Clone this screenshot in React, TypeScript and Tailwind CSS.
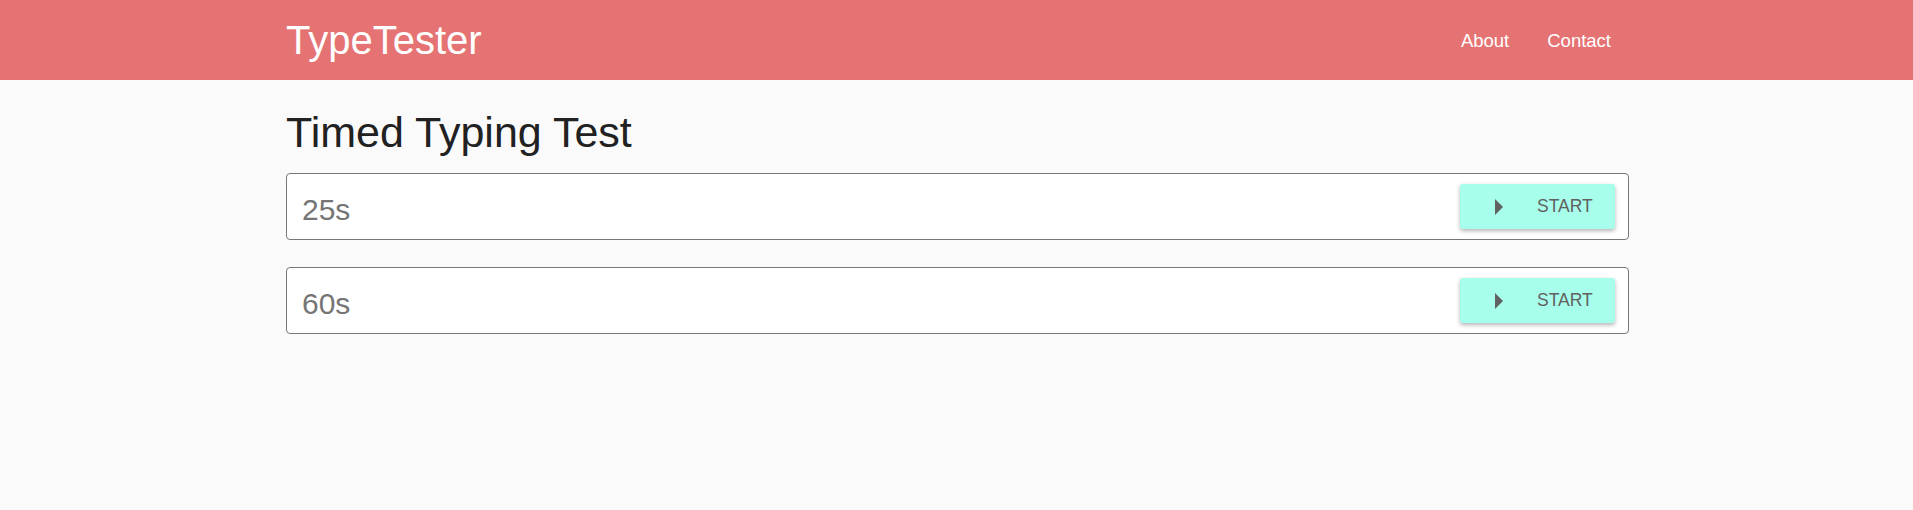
export default function App() {
  const tests = ["25s", "60s"]

  return (
    <div className="min-h-[510px] bg-[#fafafa] font-['Liberation_Sans',Arial,sans-serif]">
      {/* Header */}
      <header className="h-[80px] bg-[#e57373] pl-[2px]">
        <div className="mx-auto flex h-full w-[1343px] items-center justify-between">
          <span className="text-[40px] leading-none text-white">TypeTester</span>
          <nav className="flex items-center pt-[2px]">
            <a href="#" className="px-[19px] text-[18.5px] text-white">
              About
            </a>
            <a href="#" className="pl-[19px] pr-[18px] text-[18.5px] text-white">
              Contact
            </a>
          </nav>
        </div>
      </header>

      {/* Content */}
      <main className="pl-[2px]">
        <div className="mx-auto w-[1343px]">
          <h1 className="pt-[31px] pb-[19px] text-[43px] leading-none text-[#212121]">Timed Typing Test</h1>
          <div className="flex flex-col gap-[27px]">
            {tests.map((t) => (
              <div
                key={t}
                className="flex h-[67px] items-center justify-between rounded-[4px] border border-[#777777] bg-white pl-[15px] pr-[13px]"
              >
                <span className="pt-[5px] text-[30px] text-[#757575]">{t}</span>
                <button className="flex h-[45px] w-[155px] items-center rounded-[3px] bg-[#a7ffeb] pl-[35px] text-[17.5px] text-[#616161] shadow-[0_2px_4px_rgba(0,0,0,0.3)]">
                  <svg width="8" height="16" viewBox="0 0 8 16" className="mr-[34px]">
                    <path d="M0 0 L8 8 L0 16 Z" fill="#616161" />
                  </svg>
                  START
                </button>
              </div>
            ))}
          </div>
        </div>
      </main>
    </div>
  )
}
